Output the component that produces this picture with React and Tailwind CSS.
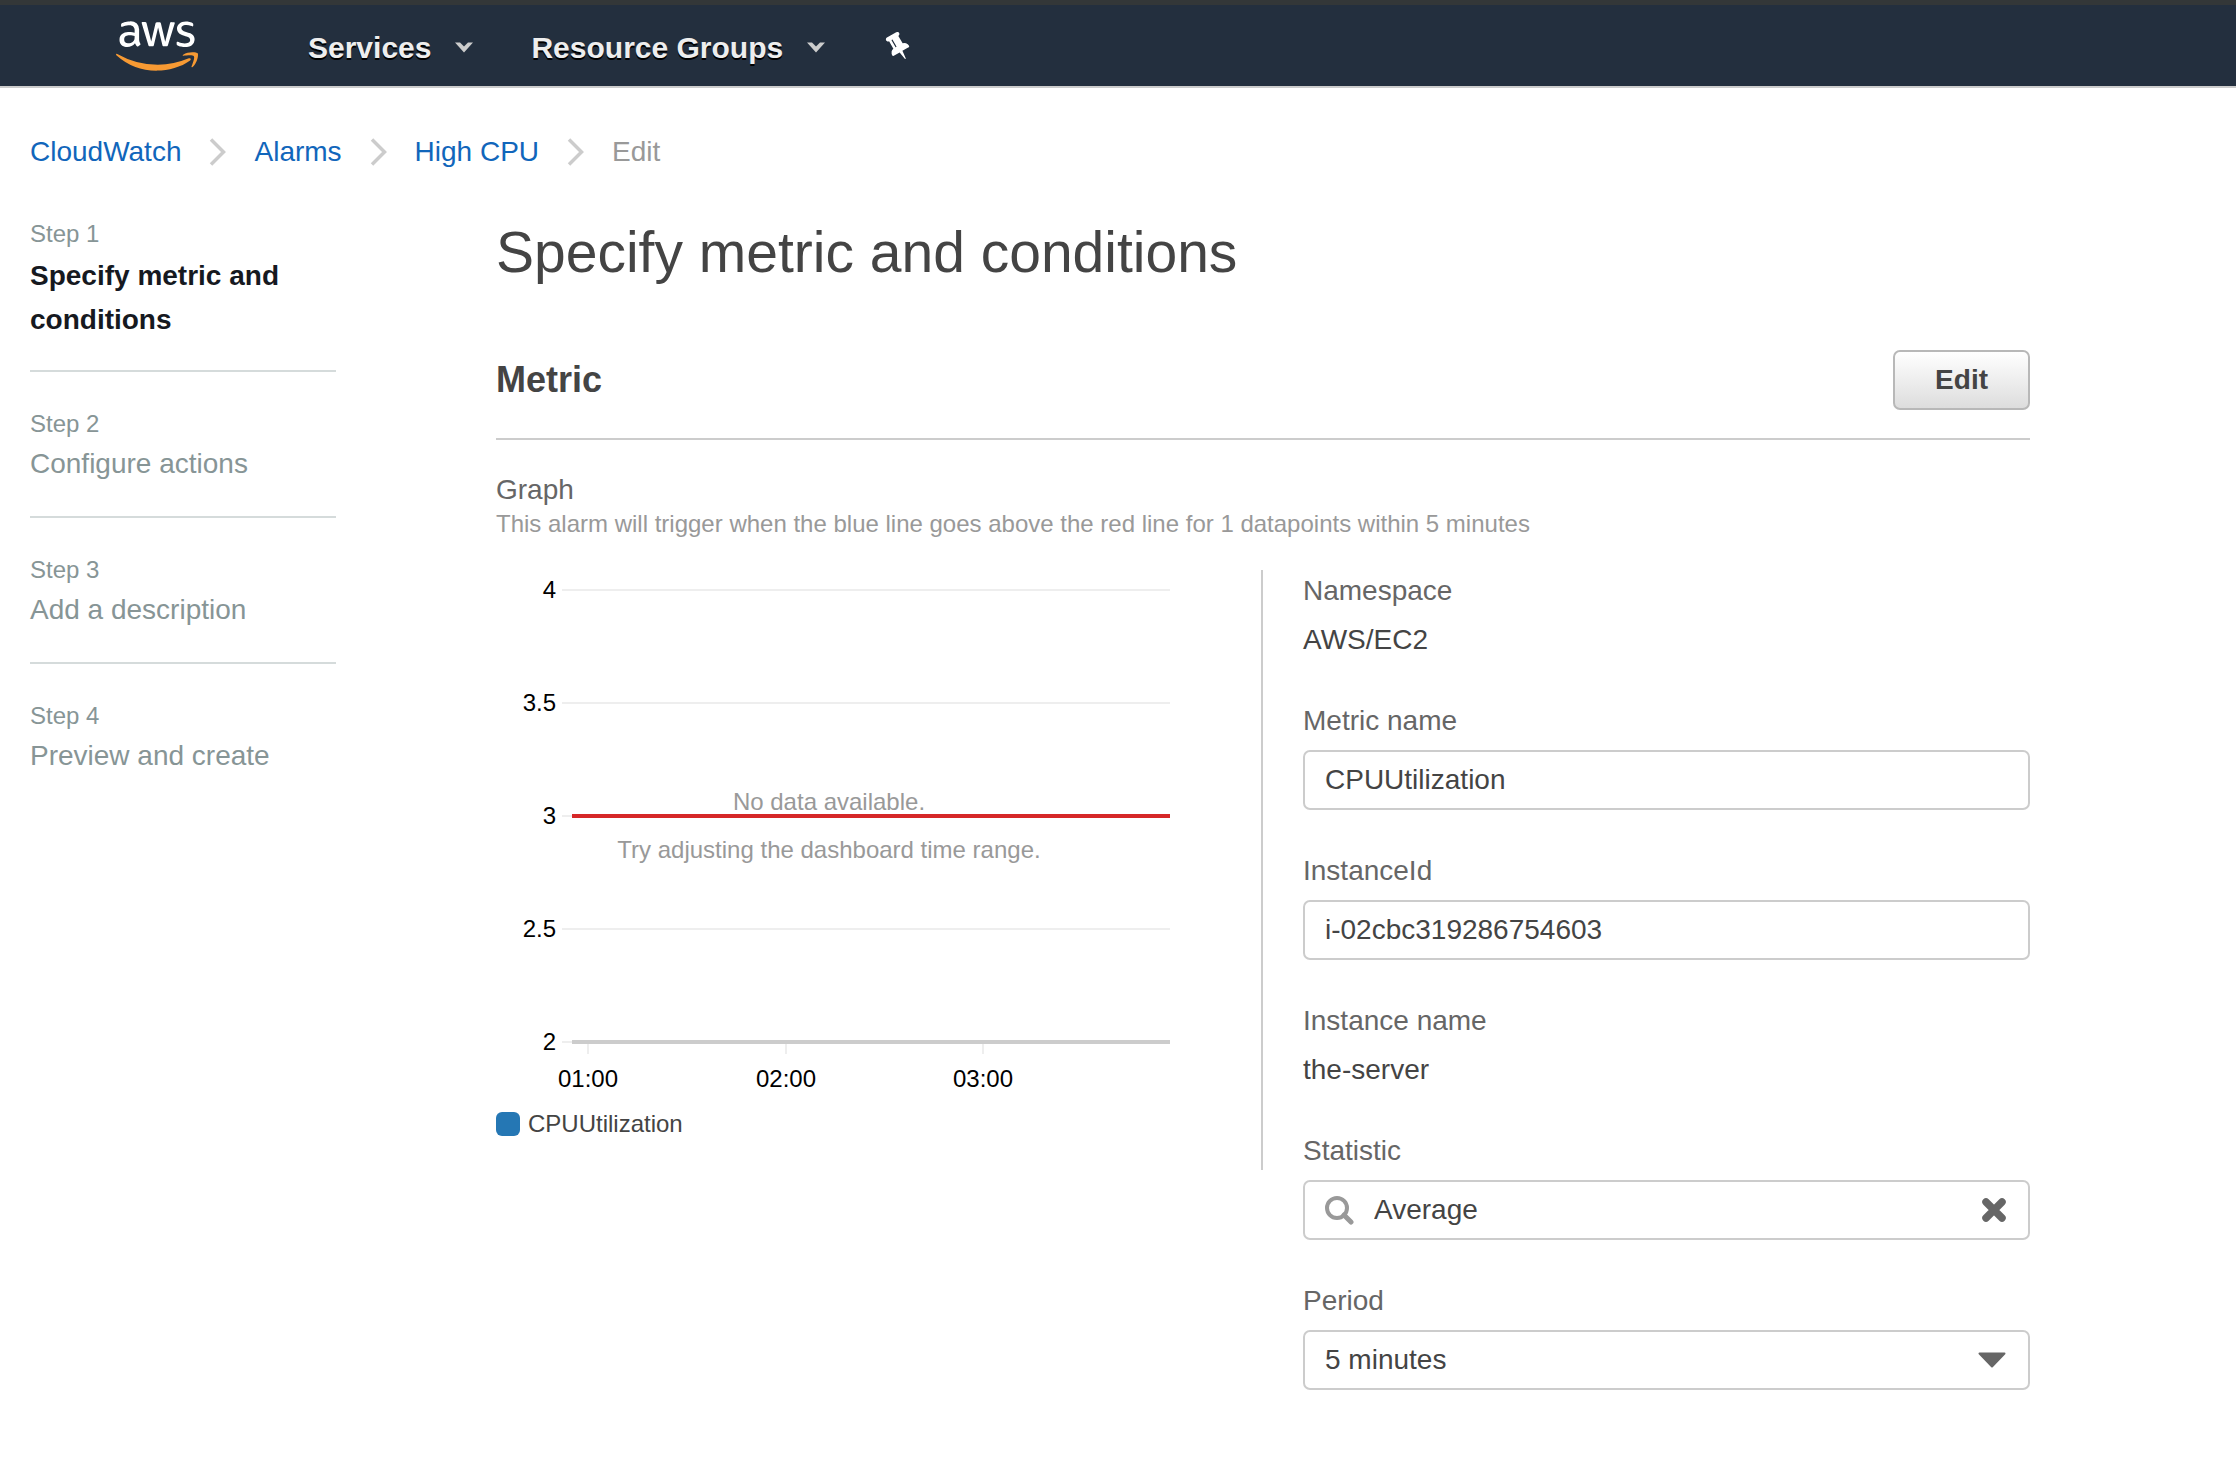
import { useState } from "react";
import { FaAws } from "react-icons/fa";

const steps = [
  { title: "Specify metric and conditions", current: true },
  { title: "Configure actions" },
  { title: "Add a description" },
  { title: "Preview and create" },
];

const crumbs = ["CloudWatch", "Alarms", "High CPU"];

function AwsLogo() {
  return (
    <a href="#home" aria-label="AWS" className="block shrink-0">
      <svg width="0" height="0" className="absolute" aria-hidden="true">
        <linearGradient id="aws-fill" gradientUnits="userSpaceOnUse" x1="0" y1="0" x2="0" y2="512">
          <stop offset="0.592" stopColor="#ffffff" />
          <stop offset="0.592" stopColor="#f79a33" />
        </linearGradient>
      </svg>
      <FaAws className="h-[66px] w-[82px]" fill="url(#aws-fill)" />
    </a>
  );
}

function NavMenu({ label }) {
  return (
    <button
      type="button"
      className="flex items-center gap-6 pt-1 text-[30px] leading-9 font-bold whitespace-nowrap text-[#eee] [text-shadow:0_2px_0_#000]"
    >
      {label}
      <svg width="18" height="11" viewBox="0 0 18 11" aria-hidden="true">
        <path d="M0 .5H5L9 4.500 13 .5H18L9 10.500Z" fill="#ccc" />
      </svg>
    </button>
  );
}

function PinIcon() {
  return (
    <svg width="30" height="30" viewBox="0 0 1792 1792" className="-rotate-30" aria-hidden="true">
      <path
        fill="#fff"
        d="M800 864v-448q0-14-9-23t-23-9-23 9-9 23v448q0 14 9 23t23 9 23-9 9-23zm672 352q0 26-19 45t-45 19h-429l-51 483q-2 12-10.500 20.500t-20.500 8.500h-1q-27 0-32-27l-76-485h-404q-26 0-45-19t-19-45q0-123 78.500-221.500t177.500-98.500v-512q-52 0-90-38t-38-90 38-90 90-38h640q52 0 90 38t38 90-38 90-90 38v512q99 0 177.500 98.500t78.500 221.500z"
      />
    </svg>
  );
}

function Header() {
  return (
    <header className="flex h-[88px] items-center border-t-[5px] border-b-2 border-t-[#333738] border-b-[#ccc] bg-[#232f3e] pl-[116px]">
      <AwsLogo />
      <nav aria-label="Main" className="ml-[110px] flex items-center gap-[58px]">
        <NavMenu label="Services" />
        <NavMenu label="Resource Groups" />
        <button type="button" aria-label="Pin shortcuts">
          <PinIcon />
        </button>
      </nav>
    </header>
  );
}

function Breadcrumbs() {
  return (
    <nav aria-label="Breadcrumb">
      <ol className="flex items-center gap-7 text-[28px] leading-10">
        {crumbs.map((c) => (
          <li key={c} className="flex items-center gap-7">
            <a href={"#" + c} className="text-[#1166bb]">
              {c}
            </a>
            <svg width="17" height="28" viewBox="0 0 17 28" fill="none" aria-hidden="true">
              <path d="M2 1.500L14.500 14L2 26.500" stroke="#ccc" strokeWidth="3.500" />
            </svg>
          </li>
        ))}
        <li aria-current="page" className="text-[#999]">
          Edit
        </li>
      </ol>
    </nav>
  );
}

function Steps() {
  return (
    <ol className="w-[306px] shrink-0 divide-y-2 divide-[#d5dbdb]">
      {steps.map((s, i) => (
        <li
          key={s.title}
          className={
            s.current
              ? "pb-7 text-[#879596]"
              : "pt-[34px] pb-[30px] text-[#879596]"
          }
        >
          <div className="text-[24px] leading-9">Step {i + 1}</div>
          <div
            className={
              s.current
                ? "mt-0.5 text-[28px] leading-[44px] font-bold text-[#16191f]"
                : "text-[28px] leading-[44px]"
            }
          >
            {s.title}
          </div>
        </li>
      ))}
    </ol>
  );
}

const yTicks = [
  { label: "4", y: 20 },
  { label: "3.5", y: 133 },
  { label: "3", y: 246 },
  { label: "2.5", y: 359 },
  { label: "2", y: 472 },
];

const xTicks = [
  { label: "01:00", x: 92 },
  { label: "02:00", x: 290 },
  { label: "03:00", x: 487 },
];

function Chart() {
  return (
    <div className="h-[600px] border-r-2 border-[#ccc]">
      <svg width="680" height="530" viewBox="0 0 680 530" fontSize="24" role="img" aria-label="CPUUtilization graph">
        {yTicks.map((t) => (
          <g key={t.label}>
            <path d={`M66 ${t.y}H674`} stroke="#eee" strokeWidth="2" />
            <text x="60" y={t.y + 8} textAnchor="end">
              {t.label}
            </text>
          </g>
        ))}
        {xTicks.map((t) => (
          <g key={t.label}>
            <path d={`M${t.x} 474v10`} stroke="#eee" strokeWidth="2" />
            <text x={t.x} y="517" textAnchor="middle">
              {t.label}
            </text>
          </g>
        ))}
        <path d="M76 472H674" stroke="#ccc" strokeWidth="4" />
        <g fill="#999" textAnchor="middle">
          <text x="333" y="240">No data available.</text>
          <text x="333" y="288">Try adjusting the dashboard time range.</text>
        </g>
        <path d="M76 246H674" stroke="#d62728" strokeWidth="4" />
      </svg>
      <div className="mt-1.5 flex items-center gap-2 text-[24px] leading-9 text-[#444]">
        <span className="size-6 rounded-md bg-[#2577b4]" />
        CPUUtilization
      </div>
    </div>
  );
}

const control =
  "h-[60px] w-full rounded-[7px] border-2 border-[#ccc] bg-white px-5 text-[28px] text-[#444]";

function Field({ label, id, children }) {
  return (
    <div className="flex flex-col gap-2">
      <label htmlFor={id} className="leading-[42px] text-[#666]">
        {label}
      </label>
      {children}
    </div>
  );
}

function ReadOnly({ label, value }) {
  return (
    <dl className="flex flex-col gap-2">
      <dt className="leading-[42px] text-[#666]">{label}</dt>
      <dd className="text-[#444]">{value}</dd>
    </dl>
  );
}

function MetricForm() {
  const [stat, setStat] = useState("Average");
  return (
    <form className="flex flex-col gap-10 pl-10 text-[28px] leading-10">
      <ReadOnly label="Namespace" value="AWS/EC2" />
      <Field label="Metric name" id="metric">
        <input id="metric" type="text" defaultValue="CPUUtilization" className={control} />
      </Field>
      <Field label="InstanceId" id="instance">
        <input id="instance" type="text" defaultValue="i-02cbc319286754603" className={control} />
      </Field>
      <ReadOnly label="Instance name" value="the-server" />
      <Field label="Statistic" id="statistic">
        <div className="flex h-[60px] items-center rounded-[7px] border-2 border-[#ccc] bg-white pr-[22px] pl-5">
          <svg width="29" height="29" viewBox="0 0 29 29" fill="none" className="shrink-0" aria-hidden="true">
            <circle cx="12" cy="12" r="10" stroke="#999" strokeWidth="4" />
            <path d="M19 19L26 26" stroke="#999" strokeWidth="5" strokeLinecap="round" />
          </svg>
          <input
            id="statistic"
            type="text"
            value={stat}
            onChange={(e) => setStat(e.target.value)}
            className="ml-5 min-w-0 flex-1 text-[28px] text-[#444] outline-none"
          />
          <button type="button" aria-label="Clear statistic" onClick={() => setStat("")}>
            <svg width="24" height="24" viewBox="0 0 24 24" fill="none" aria-hidden="true">
              <path d="M4 4L20 20M20 4L4 20" stroke="#666" strokeWidth="7.500" strokeLinecap="round" />
            </svg>
          </button>
        </div>
      </Field>
      <Field label="Period" id="period">
        <div className="relative">
          <select id="period" defaultValue="5 minutes" className={control + " appearance-none"}>
            <option>1 minute</option>
            <option>5 minutes</option>
            <option>15 minutes</option>
            <option>1 hour</option>
          </select>
          <svg
            width="28"
            height="16"
            viewBox="0 0 28 16"
            className="pointer-events-none absolute inset-y-0 right-6 my-auto"
            aria-hidden="true"
          >
            <path d="M1.500 1.500H26.500L14 14.500Z" fill="#666" stroke="#666" strokeWidth="2" strokeLinejoin="round" />
          </svg>
        </div>
      </Field>
    </form>
  );
}

export default function App() {
  return (
    <div className="min-h-screen bg-white font-['Liberation_Sans',Arial,sans-serif]">
      <Header />
      <div className="px-[30px] pt-11 pb-20">
        <Breadcrumbs />
        <div className="mt-11 flex gap-40">
          <Steps />
          <main className="max-w-[1534px] min-w-0 flex-1 pt-1">
            <h1 className="text-[57px] leading-[64px] text-[#444]">Specify metric and conditions</h1>
            <section className="mt-[66px]">
              <div className="flex items-center justify-between border-b-2 border-[#ccc] pb-7">
                <h2 className="text-[36px] leading-[44px] font-bold text-[#444]">Metric</h2>
                <button
                  type="button"
                  className="h-[60px] rounded-[7px] border-2 border-[#b8b8b8] bg-linear-to-b from-white to-[#ddd] px-10 text-[28px] font-bold text-[#444]"
                >
                  Edit
                </button>
              </div>
              <h3 className="mt-[30px] text-[28px] leading-10 text-[#666]">Graph</h3>
              <p className="text-[24px] leading-7 text-[#999]">
                This alarm will trigger when the blue line goes above the red line for 1 datapoints within 5 minutes
              </p>
              <div className="mt-8 grid grid-cols-2">
                <Chart />
                <MetricForm />
              </div>
            </section>
          </main>
        </div>
      </div>
    </div>
  );
}
